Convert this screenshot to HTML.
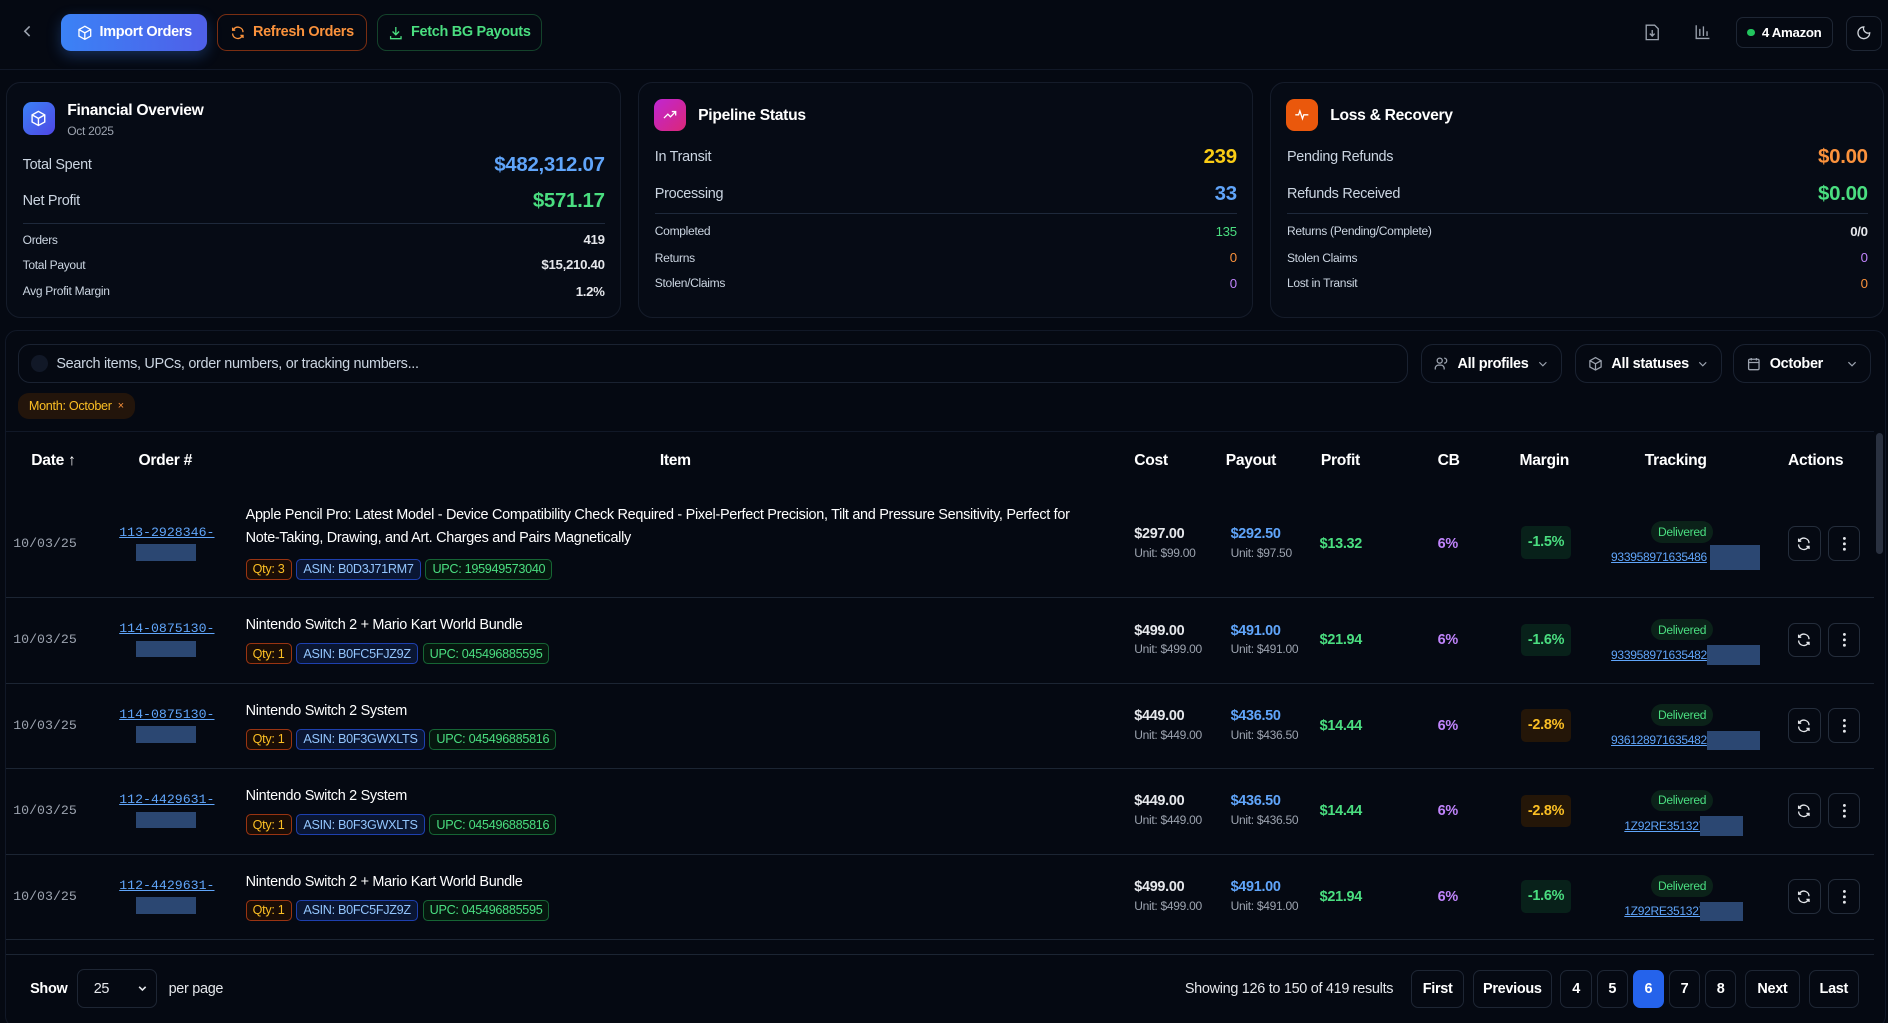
<!DOCTYPE html>
<html><head><meta charset="utf-8"><style>
*{box-sizing:border-box;margin:0;padding:0}
html,body{width:1888px;height:1023px;overflow:hidden;background:#050912}
#w{zoom:1.20408;width:1568px;height:850px;position:relative;font-family:"Liberation Sans",sans-serif;color:#e5e7eb;background:#050912;letter-spacing:-0.25px;white-space:nowrap}
.a{position:absolute}
.btn{position:absolute;top:12px;height:30px;border-radius:8px;font-size:12px;font-weight:bold;display:flex;align-items:center;justify-content:center;gap:6px;padding:0 8px}
.card{position:absolute;top:68px;height:196px;width:511px;border:1px solid #151c2a;border-radius:12px;background:#060b15}
.ic{position:absolute;width:27px;height:27px;border-radius:7px;display:flex;align-items:center;justify-content:center}
.t{position:absolute;font-size:13px;font-weight:bold;color:#fff}
.r{position:absolute;left:13px;right:13px;display:flex;justify-content:space-between;align-items:center}
.big .l{font-size:12px;color:#cbd5e1}.big .v{font-size:17px;font-weight:bold}
.sm .l{font-size:10px;color:#cbd5e1}.sm .v{font-size:11px;font-weight:bold}
.div{position:absolute;left:13px;right:13px;height:1px;background:#1e293b}
.fb{position:absolute;top:286px;height:32px;border:1px solid #1a2231;border-radius:10px;display:flex;align-items:center;font-size:12px;font-weight:bold;color:#fff;padding:0 10px;gap:7px}
.th{position:absolute;top:375px;font-size:13px;font-weight:bold;color:#fff}
.row{position:absolute;left:5px;width:1551px;border-bottom:1px solid #1c2533}
.c{position:absolute}
.date{font-family:"Liberation Mono",monospace;font-size:11px;color:#9ca3af;letter-spacing:0}
.ord{font-family:"Liberation Mono",monospace;font-size:11px;color:#60a5fa;text-decoration:underline;letter-spacing:0}
.blur{position:absolute;background:#2b4772;height:14px}
.title{font-size:12px;color:#fff;line-height:19px;width:700px;white-space:normal}
.bd{display:inline-block;font-size:10.5px;padding:2px 5px;border-radius:4px;margin-right:4px;border:1px solid}
.q{border-color:#9a3412;background:#1a0d06;color:#fbbf24}
.as{border-color:#1e40af;background:#0a1633;color:#93c5fd}
.up{border-color:#166534;background:#06170f;color:#4ade80}
.m1{font-size:12px;font-weight:bold}
.m2{font-size:10px;color:#9ca3af;margin-top:3px}
.mg{position:absolute;height:27px;width:42px;border-radius:4px;font-size:12px;font-weight:bold;display:flex;align-items:center;justify-content:center}
.dl{position:absolute;font-size:10px;color:#4ade80;background:#0b2219;border-radius:9px;padding:3px 6px}
.tr{position:absolute;font-size:10px;color:#60a5fa;text-decoration:underline}
.ab{position:absolute;width:27px;height:29px;border:1px solid #242d3b;border-radius:6px;display:flex;align-items:center;justify-content:center}
.pg{position:absolute;top:806px;height:31px;border:1px solid #1e2634;border-radius:6px;font-size:12px;font-weight:bold;color:#fff;display:flex;align-items:center;justify-content:center}
</style></head><body><div id="w">
<svg class="a" style="left:17px;top:20px" width="12" height="12" viewBox="0 0 12 12"><path d="M8 2 4 6l4 4" stroke="#9ca3af" stroke-width="1.3" fill="none"/></svg>
<div class="btn" style="left:51px;width:121px;background:linear-gradient(90deg,#3b82f6,#4f5fe8);color:#fff;box-shadow:0 4px 12px rgba(59,130,246,.3)"><svg width="13" height="13" viewBox="0 0 24 24" fill="none" stroke="#fff" stroke-width="2"><path d="M12 2 3 7v10l9 5 9-5V7z M3 7l9 5 9-5 M12 12v10"/></svg>Import Orders</div>
<div class="btn" style="left:180px;width:125px;border:1px solid #7a2e12;color:#fb923c"><svg width="13" height="13" viewBox="0 0 24 24" fill="none" stroke="#fb923c" stroke-width="2"><path d="M20 11a8 8 0 0 0-14-5l-2 2M4 4v4h4M4 13a8 8 0 0 0 14 5l2-2M20 20v-4h-4"/></svg>Refresh Orders</div>
<div class="btn" style="left:313px;width:137px;border:1px solid #14432b;color:#4ade80"><svg width="13" height="13" viewBox="0 0 24 24" fill="none" stroke="#4ade80" stroke-width="2"><path d="M12 3v12m-5-5 5 5 5-5M4 17v4h16v-4"/></svg>Fetch BG Payouts</div>
<svg class="a" style="left:1366px;top:20px" width="12" height="14" viewBox="0 0 12 14" fill="none" stroke="#9ca3af" stroke-width="1.1"><path d="M1 1h7l3 3v9H1z M6 5v5m-2-2 2 2 2-2"/></svg>
<svg class="a" style="left:1408px;top:20px" width="13" height="13" viewBox="0 0 13 13" fill="none" stroke="#9ca3af" stroke-width="1.1"><path d="M1 1v11h11 M4 10V4 M7 10V2 M10 10V6"/></svg>
<div class="a" style="left:1442px;top:14px;width:80px;height:26px;border:1px solid #1e2634;border-radius:6px;font-size:11px;font-weight:bold;color:#fff;display:flex;align-items:center;justify-content:center;gap:6px"><span style="width:6px;height:6px;border-radius:50%;background:#22c55e"></span>4 Amazon</div>
<div class="a" style="left:1533px;top:13px;width:30px;height:29px;border:1px solid #1e2634;border-radius:7px;display:flex;align-items:center;justify-content:center"><svg width="13" height="13" viewBox="0 0 24 24" fill="none" stroke="#d1d5db" stroke-width="2"><path d="M12 3a7 7 0 0 0 9 9 9 9 0 1 1-9-9z"/></svg></div>
<div class="a" style="left:0;top:57px;width:1568px;height:1px;background:#111827"></div>

<div class="card" style="left:5px">
 <div class="ic" style="left:13px;top:16px;background:linear-gradient(135deg,#3b82f6,#4f46e5)"><svg width="14" height="14" viewBox="0 0 24 24" fill="none" stroke="#fff" stroke-width="2"><path d="M12 2 3 7v10l9 5 9-5V7z M3 7l9 5 9-5 M12 12v10"/></svg></div>
 <div class="t" style="left:50px;top:16px">Financial Overview</div>
 <div class="a" style="left:50px;top:34px;font-size:10px;color:#9ca3af">Oct 2025</div>
 <div class="r big" style="top:58px"><span class="l">Total Spent</span><span class="v" style="color:#60a5fa">$482,312.07</span></div>
 <div class="r big" style="top:88px"><span class="l">Net Profit</span><span class="v" style="color:#4ade80">$571.17</span></div>
 <div class="div" style="top:116px"></div>
 <div class="r sm" style="top:124px"><span class="l">Orders</span><span class="v">419</span></div>
 <div class="r sm" style="top:145px"><span class="l">Total Payout</span><span class="v">$15,210.40</span></div>
 <div class="r sm" style="top:167px"><span class="l">Avg Profit Margin</span><span class="v">1.2%</span></div>
</div>
<div class="card" style="left:530px">
 <div class="ic" style="left:12px;top:13px;background:linear-gradient(135deg,#c026d3,#db2777)"><svg width="13" height="13" viewBox="0 0 24 24" fill="none" stroke="#fff" stroke-width="2"><path d="M3 17l6-6 4 4 8-8M15 7h6v6"/></svg></div>
 <div class="t" style="left:49px;top:20px">Pipeline Status</div>
 <div class="r big" style="top:52px"><span class="l">In Transit</span><span class="v" style="color:#facc15">239</span></div>
 <div class="r big" style="top:82px"><span class="l">Processing</span><span class="v" style="color:#60a5fa">33</span></div>
 <div class="div" style="top:108px"></div>
 <div class="r sm" style="top:117px"><span class="l">Completed</span><span class="v" style="color:#4ade80;font-weight:normal">135</span></div>
 <div class="r sm" style="top:139px"><span class="l">Returns</span><span class="v" style="color:#fb923c;font-weight:normal">0</span></div>
 <div class="r sm" style="top:160px"><span class="l">Stolen/Claims</span><span class="v" style="color:#c084fc;font-weight:normal">0</span></div>
</div>
<div class="card" style="left:1055px;width:510px">
 <div class="ic" style="left:12px;top:13px;background:#ea580c"><svg width="13" height="13" viewBox="0 0 24 24" fill="none" stroke="#fff" stroke-width="2"><path d="M2 12h5l2-6 4 12 2-6h7"/></svg></div>
 <div class="t" style="left:49px;top:20px">Loss &amp; Recovery</div>
 <div class="r big" style="top:52px"><span class="l">Pending Refunds</span><span class="v" style="color:#fb923c">$0.00</span></div>
 <div class="r big" style="top:82px"><span class="l">Refunds Received</span><span class="v" style="color:#4ade80">$0.00</span></div>
 <div class="div" style="top:108px"></div>
 <div class="r sm" style="top:117px"><span class="l">Returns (Pending/Complete)</span><span class="v">0/0</span></div>
 <div class="r sm" style="top:139px"><span class="l">Stolen Claims</span><span class="v" style="color:#c084fc;font-weight:normal">0</span></div>
 <div class="r sm" style="top:160px"><span class="l">Lost in Transit</span><span class="v" style="color:#fb923c;font-weight:normal">0</span></div>
</div>

<div class="a" style="left:4px;top:274px;width:1562px;height:580px;border:1px solid #111827;border-radius:10px"></div>
<div class="fb" style="left:15px;width:1154px;font-weight:normal;color:#cbd5e1"><span style="width:14px;height:14px;border-radius:50%;background:#111827;display:inline-block"></span>Search items, UPCs, order numbers, or tracking numbers...</div>
<div class="fb" style="left:1180px;width:117px"><svg width="13" height="13" viewBox="0 0 24 24" fill="none" stroke="#9ca3af" stroke-width="2"><circle cx="9" cy="7" r="4"/><path d="M2 21v-2a5 5 0 0 1 5-5h4a5 5 0 0 1 5 5v2M16 3a4 4 0 0 1 0 8"/></svg>All profiles<svg width="10" height="10" viewBox="0 0 10 10"><path d="M2 3.5l3 3 3-3" stroke="#9ca3af" fill="none"/></svg></div>
<div class="fb" style="left:1308px;width:122px"><svg width="13" height="13" viewBox="0 0 24 24" fill="none" stroke="#9ca3af" stroke-width="2"><path d="M12 2 3 7v10l9 5 9-5V7z M3 7l9 5 9-5 M12 12v10"/></svg>All statuses<svg width="10" height="10" viewBox="0 0 10 10"><path d="M2 3.5l3 3 3-3" stroke="#9ca3af" fill="none"/></svg></div>
<div class="fb" style="left:1439px;width:115px"><svg width="13" height="13" viewBox="0 0 24 24" fill="none" stroke="#9ca3af" stroke-width="2"><rect x="4" y="5" width="16" height="16" rx="2"/><path d="M4 10h16M8 3v4M16 3v4"/></svg>October<span style="flex:1"></span><svg width="10" height="10" viewBox="0 0 10 10"><path d="M2 3.5l3 3 3-3" stroke="#9ca3af" fill="none"/></svg></div>
<div class="a" style="left:15px;top:326px;height:22px;padding:0 9px;border-radius:9px;background:#23150b;color:#fbbf24;font-size:10.5px;display:flex;align-items:center;gap:5px">Month: October <span style="font-size:9px;color:#fb923c">×</span></div>
<div class="a" style="left:5px;top:358px;width:1551px;height:1px;background:#111827"></div>

<div class="th" style="left:26px">Date ↑</div>
<div class="th" style="left:115px">Order #</div>
<div class="th" style="left:548px">Item</div>
<div class="th" style="left:942px">Cost</div>
<div class="th" style="left:1018px">Payout</div>
<div class="th" style="left:1097px">Profit</div>
<div class="th" style="left:1194px">CB</div>
<div class="th" style="left:1262px">Margin</div>
<div class="th" style="left:1366px">Tracking</div>
<div class="th" style="left:1485px">Actions</div>
<div class="a" style="left:1558px;top:360px;width:6px;height:100px;border-radius:3px;background:#2a3140"></div>

<div class="row" style="top:405px;height:92px">
 <div class="c date" style="left:6px;top:40px">10/03/25</div>
 <div class="c ord" style="left:94px;top:31px">113-2928346-</div><div class="blur" style="left:108px;top:47px;width:50px"></div>
 <div class="c" style="left:199px;top:14px"><div class="title" style="width:690px">Apple Pencil Pro: Latest Model - Device Compatibility Check Required - Pixel-Perfect Precision, Tilt and Pressure Sensitivity, Perfect for Note-Taking, Drawing, and Art. Charges and Pairs Magnetically</div><div style="margin-top:6px"><span class="bd q">Qty: 3</span><span class="bd as">ASIN: B0D3J71RM7</span><span class="bd up">UPC: 195949573040</span></div></div>
 <div class="c" style="left:937px;top:32px"><div class="m1">$297.00</div><div class="m2">Unit: $99.00</div></div>
 <div class="c" style="left:1017px;top:32px"><div class="m1" style="color:#60a5fa">$292.50</div><div class="m2">Unit: $97.50</div></div>
 <div class="c m1" style="left:1091px;top:40px;color:#4ade80">$13.32</div>
 <div class="c m1" style="left:1189px;top:40px;color:#c084fc">6%</div>
 <div class="mg" style="left:1258px;top:32px;background:#08211a;color:#4ade80">-1.5%</div>
 <div class="dl" style="left:1366px;top:28px">Delivered</div>
 <div class="tr" style="left:1333px;top:52px">933958971635486</div><div class="blur" style="left:1415px;top:48px;width:42px;height:20px"></div>
 <div class="ab" style="left:1480px;top:32px"><svg width="13" height="13" viewBox="0 0 24 24" fill="none" stroke="#e5e7eb" stroke-width="2"><path d="M20 11a8 8 0 0 0-14-5l-2 2M4 4v4h4M4 13a8 8 0 0 0 14 5l2-2M20 20v-4h-4"/></svg></div>
 <div class="ab" style="left:1513px;top:32px"><svg width="4" height="13" viewBox="0 0 4 13" fill="#e5e7eb"><circle cx="2" cy="2" r="1.2"/><circle cx="2" cy="6.5" r="1.2"/><circle cx="2" cy="11" r="1.2"/></svg></div>
</div>

<div class="row" style="top:497px;height:71px">
 <div class="c date" style="left:6px;top:28px">10/03/25</div>
 <div class="c ord" style="left:94px;top:19px">114-0875130-</div><div class="blur" style="left:108px;top:35px;width:50px"></div>
 <div class="c" style="left:199px;top:13px"><div class="title">Nintendo Switch 2 + Mario Kart World Bundle</div><div style="margin-top:4px"><span class="bd q">Qty: 1</span><span class="bd as">ASIN: B0FC5FJZ9Z</span><span class="bd up">UPC: 045496885595</span></div></div>
 <div class="c" style="left:937px;top:20px"><div class="m1">$499.00</div><div class="m2">Unit: $499.00</div></div>
 <div class="c" style="left:1017px;top:20px"><div class="m1" style="color:#60a5fa">$491.00</div><div class="m2">Unit: $491.00</div></div>
 <div class="c m1" style="left:1091px;top:28px;color:#4ade80">$21.94</div>
 <div class="c m1" style="left:1189px;top:28px;color:#c084fc">6%</div>
 <div class="mg" style="left:1258px;top:21px;background:#08211a;color:#4ade80">-1.6%</div>
 <div class="dl" style="left:1366px;top:17px">Delivered</div>
 <div class="tr" style="left:1333px;top:41px">933958971635482</div><div class="blur" style="left:1413px;top:39px;width:44px;height:16px"></div>
 <div class="ab" style="left:1480px;top:20px"><svg width="13" height="13" viewBox="0 0 24 24" fill="none" stroke="#e5e7eb" stroke-width="2"><path d="M20 11a8 8 0 0 0-14-5l-2 2M4 4v4h4M4 13a8 8 0 0 0 14 5l2-2M20 20v-4h-4"/></svg></div>
 <div class="ab" style="left:1513px;top:20px"><svg width="4" height="13" viewBox="0 0 4 13" fill="#e5e7eb"><circle cx="2" cy="2" r="1.2"/><circle cx="2" cy="6.5" r="1.2"/><circle cx="2" cy="11" r="1.2"/></svg></div>
</div>

<div class="row" style="top:568px;height:71px">
 <div class="c date" style="left:6px;top:28px">10/03/25</div>
 <div class="c ord" style="left:94px;top:19px">114-0875130-</div><div class="blur" style="left:108px;top:35px;width:50px"></div>
 <div class="c" style="left:199px;top:13px"><div class="title">Nintendo Switch 2 System</div><div style="margin-top:4px"><span class="bd q">Qty: 1</span><span class="bd as">ASIN: B0F3GWXLTS</span><span class="bd up">UPC: 045496885816</span></div></div>
 <div class="c" style="left:937px;top:20px"><div class="m1">$449.00</div><div class="m2">Unit: $449.00</div></div>
 <div class="c" style="left:1017px;top:20px"><div class="m1" style="color:#60a5fa">$436.50</div><div class="m2">Unit: $436.50</div></div>
 <div class="c m1" style="left:1091px;top:28px;color:#4ade80">$14.44</div>
 <div class="c m1" style="left:1189px;top:28px;color:#c084fc">6%</div>
 <div class="mg" style="left:1258px;top:21px;background:#241608;color:#fbbf24">-2.8%</div>
 <div class="dl" style="left:1366px;top:17px">Delivered</div>
 <div class="tr" style="left:1333px;top:41px">936128971635482</div><div class="blur" style="left:1413px;top:39px;width:44px;height:16px"></div>
 <div class="ab" style="left:1480px;top:20px"><svg width="13" height="13" viewBox="0 0 24 24" fill="none" stroke="#e5e7eb" stroke-width="2"><path d="M20 11a8 8 0 0 0-14-5l-2 2M4 4v4h4M4 13a8 8 0 0 0 14 5l2-2M20 20v-4h-4"/></svg></div>
 <div class="ab" style="left:1513px;top:20px"><svg width="4" height="13" viewBox="0 0 4 13" fill="#e5e7eb"><circle cx="2" cy="2" r="1.2"/><circle cx="2" cy="6.5" r="1.2"/><circle cx="2" cy="11" r="1.2"/></svg></div>
</div>

<div class="row" style="top:639px;height:71px">
 <div class="c date" style="left:6px;top:28px">10/03/25</div>
 <div class="c ord" style="left:94px;top:19px">112-4429631-</div><div class="blur" style="left:108px;top:35px;width:50px"></div>
 <div class="c" style="left:199px;top:13px"><div class="title">Nintendo Switch 2 System</div><div style="margin-top:4px"><span class="bd q">Qty: 1</span><span class="bd as">ASIN: B0F3GWXLTS</span><span class="bd up">UPC: 045496885816</span></div></div>
 <div class="c" style="left:937px;top:20px"><div class="m1">$449.00</div><div class="m2">Unit: $449.00</div></div>
 <div class="c" style="left:1017px;top:20px"><div class="m1" style="color:#60a5fa">$436.50</div><div class="m2">Unit: $436.50</div></div>
 <div class="c m1" style="left:1091px;top:28px;color:#4ade80">$14.44</div>
 <div class="c m1" style="left:1189px;top:28px;color:#c084fc">6%</div>
 <div class="mg" style="left:1258px;top:21px;background:#241608;color:#fbbf24">-2.8%</div>
 <div class="dl" style="left:1366px;top:17px">Delivered</div>
 <div class="tr" style="left:1344px;top:41px">1Z92RE351327</div><div class="blur" style="left:1407px;top:39px;width:36px;height:16px"></div>
 <div class="ab" style="left:1480px;top:20px"><svg width="13" height="13" viewBox="0 0 24 24" fill="none" stroke="#e5e7eb" stroke-width="2"><path d="M20 11a8 8 0 0 0-14-5l-2 2M4 4v4h4M4 13a8 8 0 0 0 14 5l2-2M20 20v-4h-4"/></svg></div>
 <div class="ab" style="left:1513px;top:20px"><svg width="4" height="13" viewBox="0 0 4 13" fill="#e5e7eb"><circle cx="2" cy="2" r="1.2"/><circle cx="2" cy="6.5" r="1.2"/><circle cx="2" cy="11" r="1.2"/></svg></div>
</div>

<div class="row" style="top:710px;height:71px">
 <div class="c date" style="left:6px;top:28px">10/03/25</div>
 <div class="c ord" style="left:94px;top:19px">112-4429631-</div><div class="blur" style="left:108px;top:35px;width:50px"></div>
 <div class="c" style="left:199px;top:13px"><div class="title">Nintendo Switch 2 + Mario Kart World Bundle</div><div style="margin-top:4px"><span class="bd q">Qty: 1</span><span class="bd as">ASIN: B0FC5FJZ9Z</span><span class="bd up">UPC: 045496885595</span></div></div>
 <div class="c" style="left:937px;top:20px"><div class="m1">$499.00</div><div class="m2">Unit: $499.00</div></div>
 <div class="c" style="left:1017px;top:20px"><div class="m1" style="color:#60a5fa">$491.00</div><div class="m2">Unit: $491.00</div></div>
 <div class="c m1" style="left:1091px;top:28px;color:#4ade80">$21.94</div>
 <div class="c m1" style="left:1189px;top:28px;color:#c084fc">6%</div>
 <div class="mg" style="left:1258px;top:21px;background:#08211a;color:#4ade80">-1.6%</div>
 <div class="dl" style="left:1366px;top:17px">Delivered</div>
 <div class="tr" style="left:1344px;top:41px">1Z92RE351327</div><div class="blur" style="left:1407px;top:39px;width:36px;height:16px"></div>
 <div class="ab" style="left:1480px;top:20px"><svg width="13" height="13" viewBox="0 0 24 24" fill="none" stroke="#e5e7eb" stroke-width="2"><path d="M20 11a8 8 0 0 0-14-5l-2 2M4 4v4h4M4 13a8 8 0 0 0 14 5l2-2M20 20v-4h-4"/></svg></div>
 <div class="ab" style="left:1513px;top:20px"><svg width="4" height="13" viewBox="0 0 4 13" fill="#e5e7eb"><circle cx="2" cy="2" r="1.2"/><circle cx="2" cy="6.5" r="1.2"/><circle cx="2" cy="11" r="1.2"/></svg></div>
</div>
<div class="a" style="left:5px;top:792px;width:1551px;height:1px;background:#1c2533"></div>

<div class="a" style="left:25px;top:815px;font-size:12px;font-weight:bold;color:#fff">Show</div>
<div class="a" style="left:64px;top:805px;width:66px;height:32px;border:1px solid #1e2634;border-radius:6px;font-size:12px;color:#e5e7eb;display:flex;align-items:center;justify-content:space-between;padding:0 6px 0 13px">25<svg width="9" height="9" viewBox="0 0 10 10"><path d="M2 3.5l3 3 3-3" stroke="#e5e7eb" stroke-width="1.5" fill="none"/></svg></div>
<div class="a" style="left:140px;top:815px;font-size:12px;color:#e5e7eb">per page</div>
<div class="a" style="left:984px;top:815px;font-size:12px;color:#e5e7eb">Showing 126 to 150 of 419 results</div>
<div class="pg" style="left:1172px;width:44px">First</div>
<div class="pg" style="left:1223px;width:66px">Previous</div>
<div class="pg" style="left:1296px;width:26px">4</div>
<div class="pg" style="left:1326px;width:26px">5</div>
<div class="pg" style="left:1356px;width:26px;background:#2563eb;border-color:#2563eb">6</div>
<div class="pg" style="left:1386px;width:26px">7</div>
<div class="pg" style="left:1416px;width:26px">8</div>
<div class="pg" style="left:1449px;width:46px">Next</div>
<div class="pg" style="left:1502px;width:42px">Last</div>
</div></body></html>
